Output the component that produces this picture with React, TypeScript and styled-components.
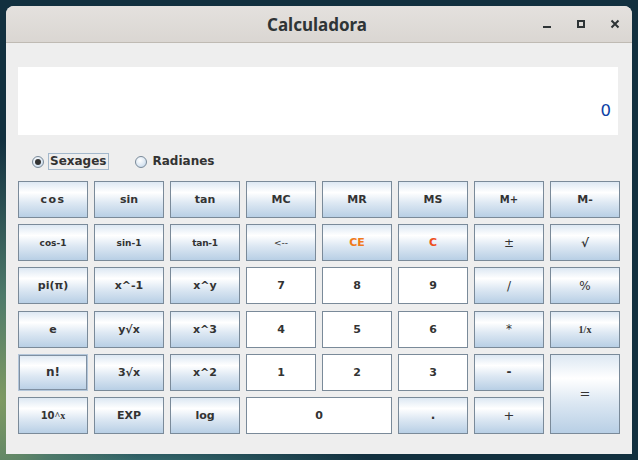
import React from "react";
import styled, { createGlobalStyle, css } from "styled-components";

const GlobalStyle = createGlobalStyle`
  html, body { margin: 0; padding: 0; }
  body {
    width: 638px;
    height: 460px;
    overflow: hidden;
    background:
      radial-gradient(ellipse 140px 260px at 0px 400px, #7f9a62 0%, #4e7a6a 40%, rgba(18,48,63,0) 100%),
      radial-gradient(ellipse 260px 40px at 120px 470px, #3f7a7a 0%, rgba(18,48,63,0) 100%),
      #12303f;
    font-family: "DejaVu Sans", "Liberation Sans", sans-serif;
  }
`;

const Desktop = styled.div`
  width: 638px;
  height: 460px;
  box-sizing: border-box;
  padding: 6px 6px 0 6px;
`;

const Window = styled.div`
  width: 626px;
  height: 448px;
  background: #eeeeee;
  border-radius: 8px 8px 0 0;
  overflow: hidden;
  display: flex;
  flex-direction: column;
`;

const TitleBar = styled.div`
  height: 36px;
  flex: none;
  display: grid;
  grid-template-columns: 1fr auto 1fr;
  align-items: center;
  background: linear-gradient(#e4e1de, #dad6d2);
  border-bottom: 1px solid #bfbab3;
`;

const Title = styled.div`
  grid-column: 2;
  font-family: "Noto Sans", "Open Sans", sans-serif;
  font-weight: 700;
  font-size: 17px;
  color: #2e3436;
  padding-right: 4px;
`;

const Controls = styled.div`
  grid-column: 3;
  justify-self: end;
  display: flex;
`;

const ControlButton = styled.div`
  width: 34px;
  height: 34px;
  display: flex;
  align-items: center;
  justify-content: center;
`;

const Content = styled.div`
  padding: 24px 12px 0 12px;
  display: flex;
  flex-direction: column;
`;

const Display = styled.div`
  width: 600px;
  height: 68px;
  box-sizing: border-box;
  background: #ffffff;
  display: flex;
  align-items: flex-end;
  justify-content: flex-end;
  padding: 0 7px 14px 0;
  font-family: "DejaVu Sans", sans-serif;
  font-size: 16.5px;
  line-height: 20px;
  color: #0d3fa6;
`;

const RadioRow = styled.div`
  margin-top: 18px;
  height: 17px;
  display: flex;
  align-items: center;
  padding-left: 14px;
`;

const RadioOption = styled.label<{ $gapAfter?: number }>`
  display: flex;
  align-items: center;
  gap: 4px;
  margin-right: ${(p) => p.$gapAfter ?? 0}px;
`;

const RadioCircle = styled.span<{ $checked?: boolean }>`
  width: 10px;
  height: 10px;
  border-radius: 50%;
  border: 1px solid #7a8a99;
  background: radial-gradient(circle at 40% 35%, #ffffff 0%, #dde8f3 55%, #b8cfe5 100%);
  display: flex;
  align-items: center;
  justify-content: center;
  ${(p) =>
    p.$checked &&
    css`
      &::after {
        content: "";
        width: 6px;
        height: 6px;
        border-radius: 50%;
        background: #333333;
      }
    `}
`;

const RadioLabel = styled.span<{ $focused?: boolean }>`
  font-family: "DejaVu Sans", sans-serif;
  font-weight: 700;
  font-size: 12px;
  color: #333333;
  height: 15px;
  line-height: 15px;
  padding: 0 1px;
  border: 1px solid ${(p) => (p.$focused ? "#a3b8cc" : "transparent")};
`;

const Grid = styled.div`
  margin-top: 11px;
  display: grid;
  grid-template-columns: repeat(8, 70px);
  grid-template-rows: repeat(6, 37px);
  column-gap: 6px;
  row-gap: 6.2px;
`;

type Variant = "fn" | "num";

const Key = styled.button<{
  $variant: Variant;
  $color?: string;
  $size?: number;
  $weight?: number;
  $col?: string;
  $row?: string;
  $focus?: boolean;
  $track?: number;
  $serif?: boolean;
}>`
  box-sizing: border-box;
  margin: 0;
  padding: 0;
  border: 1px solid #7a8a99;
  display: flex;
  align-items: center;
  justify-content: center;
  font-family: ${(p) => (p.$serif ? '"Liberation Serif", serif' : '"DejaVu Sans", sans-serif')};
  font-size: ${(p) => p.$size ?? 11}px;
  font-weight: ${(p) => p.$weight ?? 700};
  letter-spacing: ${(p) => p.$track ?? 0}px;
  color: ${(p) => p.$color ?? "#333333"};
  grid-column: ${(p) => p.$col ?? "auto"};
  grid-row: ${(p) => p.$row ?? "auto"};
  background: ${(p) =>
    p.$variant === "num"
      ? "#ffffff"
      : "linear-gradient(180deg, #dde8f3 0%, #ffffff 30%, #dde8f3 60%, #b8cfe5 100%)"};
  ${(p) =>
    p.$focus &&
    css`
      border-color: #b3c6da;
      box-shadow: inset 0 0 0 1px #7f90a2;
    `}
`;

const SerifPart = styled.span`
  font-family: "Liberation Serif", serif;
  font-weight: 700;
`;

type KeyDef = {
  label: React.ReactNode;
  v: Variant;
  color?: string;
  size?: number;
  weight?: number;
  col?: string;
  row?: string;
  focus?: boolean;
  track?: number;
  serif?: boolean;
};

const keys: KeyDef[] = [
  { label: "cos", v: "fn", track: 1.5 },
  { label: "sin", v: "fn" },
  { label: "tan", v: "fn" },
  { label: "MC", v: "fn" },
  { label: "MR", v: "fn" },
  { label: "MS", v: "fn" },
  { label: "M+", v: "fn", size: 10 },
  { label: "M-", v: "fn" },

  { label: "cos-1", v: "fn", size: 9 },
  { label: "sin-1", v: "fn", size: 9 },
  { label: "tan-1", v: "fn", size: 9, track: -0.3 },
  { label: "<--", v: "fn", size: 9, weight: 400 },
  { label: "CE", v: "fn", color: "#f07a1c" },
  { label: "C", v: "fn", color: "#ee4f1c" },
  { label: "±", v: "fn", size: 12, weight: 400 },
  { label: "√", v: "fn", size: 12 },

  { label: "pi(π)", v: "fn" },
  { label: "x^-1", v: "fn" },
  { label: "x^y", v: "fn" },
  { label: "7", v: "num" },
  { label: "8", v: "num" },
  { label: "9", v: "num" },
  { label: "/", v: "fn", size: 12, weight: 400 },
  { label: "%", v: "fn", size: 12, weight: 400 },

  { label: "e", v: "fn" },
  { label: "y√x", v: "fn" },
  { label: "x^3", v: "fn" },
  { label: "4", v: "num" },
  { label: "5", v: "num" },
  { label: "6", v: "num" },
  { label: "*", v: "fn", size: 12, weight: 400 },
  { label: "1/x", v: "fn", size: 10, serif: true },

  { label: "n!", v: "fn", focus: true, size: 12 },
  { label: "3√x", v: "fn" },
  { label: "x^2", v: "fn" },
  { label: "1", v: "num" },
  { label: "2", v: "num" },
  { label: "3", v: "num" },
  { label: "-", v: "fn", size: 12 },
  { label: "=", v: "fn", size: 13, weight: 400, col: "8", row: "5 / span 2" },

  {
    label: (
      <>
        10<SerifPart>^x</SerifPart>
      </>
    ),
    v: "fn",
    size: 10,
  },
  { label: "EXP", v: "fn" },
  { label: "log", v: "fn" },
  { label: "0", v: "num", col: "4 / span 2" },
  { label: ".", v: "fn", size: 12 },
  { label: "+", v: "fn", size: 13, weight: 400 },
];

const Minimize = () => (
  <svg width="10" height="10" viewBox="0 0 10 10">
    <rect x="1" y="7" width="8" height="2" fill="#2e3436" />
  </svg>
);

const Maximize = () => (
  <svg width="10" height="10" viewBox="0 0 10 10">
    <rect x="2" y="2" width="6" height="6" fill="none" stroke="#2e3436" strokeWidth="2" />
  </svg>
);

const Close = () => (
  <svg width="10" height="10" viewBox="0 0 10 10">
    <path d="M1.5 1.5 L8.5 8.5 M8.5 1.5 L1.5 8.5" stroke="#2e3436" strokeWidth="2" />
  </svg>
);

export default function App() {
  return (
    <>
      <GlobalStyle />
      <Desktop>
        <Window>
          <TitleBar>
            <Title>Calculadora</Title>
            <Controls>
              <ControlButton>
                <Minimize />
              </ControlButton>
              <ControlButton>
                <Maximize />
              </ControlButton>
              <ControlButton>
                <Close />
              </ControlButton>
            </Controls>
          </TitleBar>
          <Content>
            <Display>0</Display>
            <RadioRow>
              <RadioOption $gapAfter={26}>
                <RadioCircle $checked />
                <RadioLabel $focused>Sexages</RadioLabel>
              </RadioOption>
              <RadioOption>
                <RadioCircle />
                <RadioLabel>Radianes</RadioLabel>
              </RadioOption>
            </RadioRow>
            <Grid>
              {keys.map((k, i) => (
                <Key
                  key={i}
                  $variant={k.v}
                  $color={k.color}
                  $size={k.size}
                  $weight={k.weight}
                  $col={k.col}
                  $row={k.row}
                  $focus={k.focus}
                  $track={k.track}
                  $serif={k.serif}
                >
                  {k.label}
                </Key>
              ))}
            </Grid>
          </Content>
        </Window>
      </Desktop>
    </>
  );
}
